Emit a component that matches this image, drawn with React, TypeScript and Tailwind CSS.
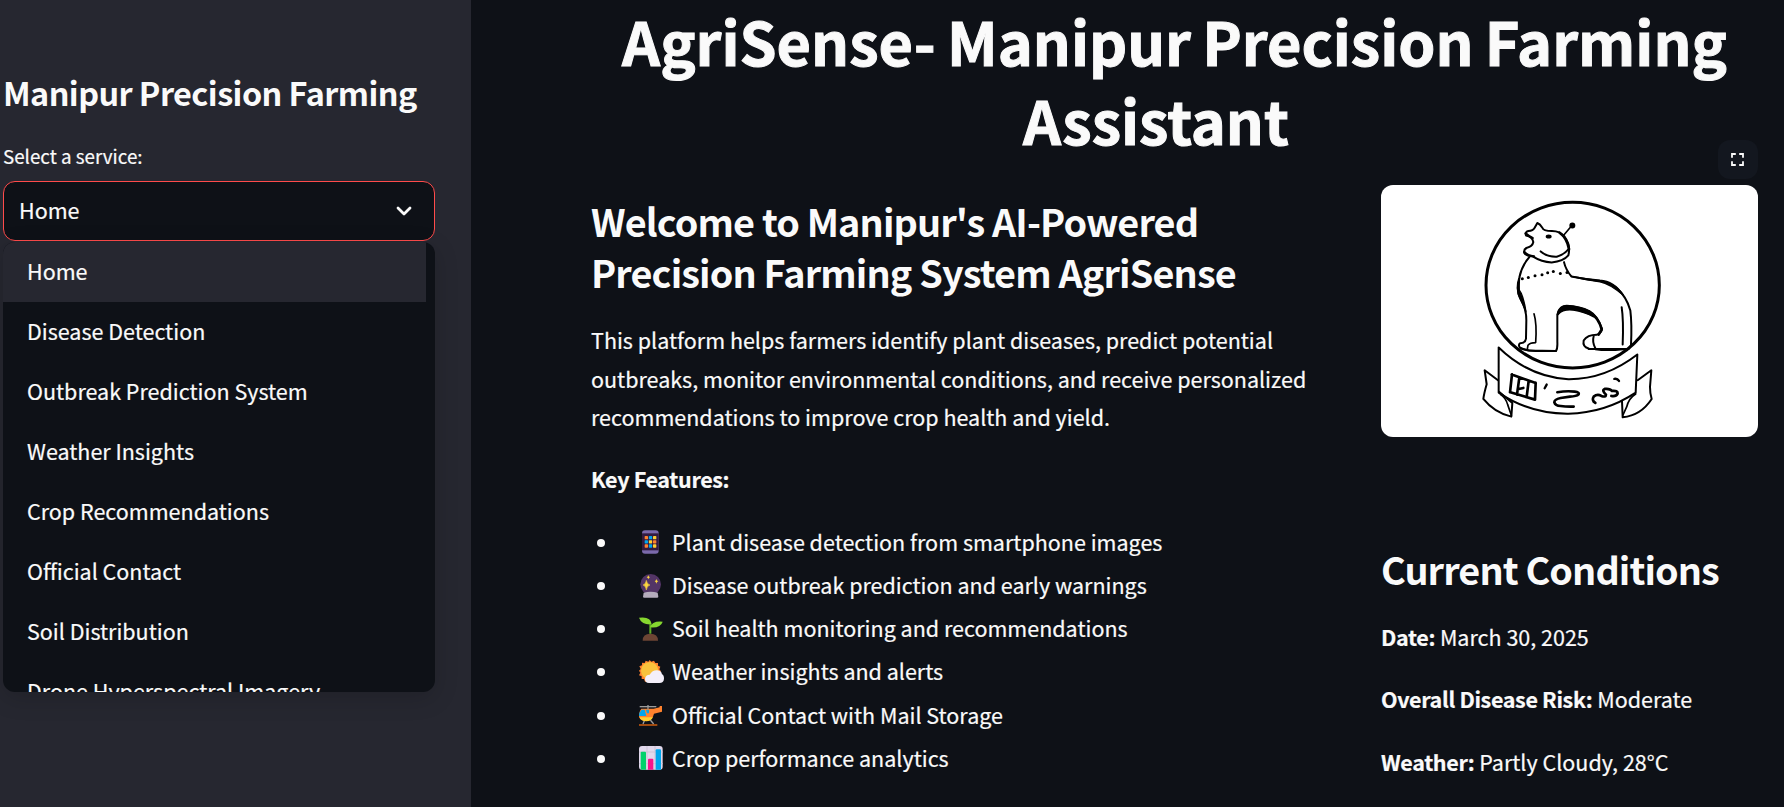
import type { ReactNode } from 'react';

const services = [
  'Home',
  'Disease Detection',
  'Outbreak Prediction System',
  'Weather Insights',
  'Crop Recommendations',
  'Official Contact',
  'Soil Distribution',
  'Drone Hyperspectral Imagery',
];

function Glyph({ children }: { children: ReactNode }) {
  return (
    <svg viewBox="0 0 75 72" className="mt-[2px] h-[24px] w-[25px] shrink-0">
      {children}
    </svg>
  );
}

const PhoneGlyph = () => (
  <Glyph>
    <rect x="9" y="1" width="50" height="70" rx="9" fill="#7a69ab" />
    <rect x="9" y="10" width="50" height="51" fill="#321b41" />
    {['#ff822d', '#00a6ed', '#ffce31', '#00a6ed', '#ffce31', '#ff822d', '#ff822d', '#00a6ed', '#ffce31'].map((c, i) => (
      <rect key={i} x={17 + (i % 3) * 12.5} y={18 + Math.floor(i / 3) * 12.5} width="10" height="10" rx="2" fill={c} />
    ))}
  </Glyph>
);

const CrystalGlyph = () => (
  <Glyph>
    <circle cx="35" cy="31" r="31" fill="#533566" />
    <path d="M14 56Q35 50 56 56L58 68Q58 71 54 71H16Q12 71 12 68Z" fill="#b4acbc" />
    <path d="M22 19Q24 31 33 33Q24 35 22 48Q20 35 12 33Q20 31 22 19Z" fill="#fcd53f" stroke="#fcd53f" strokeWidth="1.5" />
    <path d="M28 4Q29 9 33 10Q29 11 28 16Q27 11 23 10Q27 9 28 4ZM52 15Q53 20 58 22Q53 23 52 29Q51 23 47 22Q51 20 52 15Z" fill="#fcd53f" />
  </Glyph>
);

const SeedlingGlyph = () => (
  <Glyph>
    <path d="M11 71Q11 50 34 50Q57 50 57 71Z" fill="#6d4534" />
    <path d="M34 50V22" fill="none" stroke="#5fb022" strokeWidth="6" />
    <path d="M0 2Q36 -3 38 22Q8 24 0 2Z" fill="#86d72f" />
    <path d="M33 31Q39 11 71 14Q65 34 33 31Z" fill="#86d72f" />
  </Glyph>
);

const SunGlyph = () => (
  <Glyph>
    <path
      d="M32 0L37 5L45 2L49 9L57 9L57 17L64 20L61 28L66 34L61 39L64 47L57 51L45 63L32 65L18 65L15 57L8 57L8 49L0 46L4 38L0 32L5 27L1 19L9 16L9 8L17 9L20 2L28 5Z"
      fill="#ff822d"
    />
    <circle cx="32" cy="32" r="26" fill="#f9c23c" />
    <path d="M30 69Q17 68 18 56Q20 44 32 44Q40 31 53 31Q67 31 69 43Q75 45 75 56Q74 69 61 69Z" fill="#f4effa" />
  </Glyph>
);

const HelicopterGlyph = () => (
  <Glyph>
    <path d="M2 11H52" stroke="#9b9b9b" strokeWidth="4" />
    <path d="M27 6V18" stroke="#9b9b9b" strokeWidth="4" />
    <path d="M16 53L12 63M34 51L44 63" stroke="#9b9b9b" strokeWidth="4" />
    <path d="M7 17H44L62 13V9H69V26L45 32Q40 54 22 54Q5 54 0 41Q0 24 7 17Z" fill="#ff822d" />
    <path d="M1 43H42Q36 55 22 55Q6 55 1 43Z" fill="#ffce31" />
    <path d="M8 20H17L22 39H0Q0 27 8 20ZM21 20H30V31H24Z" fill="#00a6ed" />
    <path d="M0 66H55" stroke="#e8660d" strokeWidth="4" />
  </Glyph>
);

const ChartGlyph = () => (
  <Glyph>
    <rect x="0" y="0" width="71" height="71" rx="9" fill="#e1d8ec" />
    <path d="M0 18H71M0 53H71M24 0V71M48 0V71" stroke="#cdc4d6" strokeWidth="3" />
    <path d="M5 71V20Q5 17 8 17H18Q21 17 21 20V71Z" fill="#00d26a" />
    <path d="M27 71V41Q27 38 30 38H40Q43 38 43 41V71Z" fill="#f8148c" />
    <path d="M50 71V13Q50 10 53 10H63Q66 10 66 13V71Z" fill="#00a6ed" />
  </Glyph>
);

const features = [
  { icon: <PhoneGlyph />, text: 'Plant disease detection from smartphone images' },
  { icon: <CrystalGlyph />, text: 'Disease outbreak prediction and early warnings' },
  { icon: <SeedlingGlyph />, text: 'Soil health monitoring and recommendations' },
  { icon: <SunGlyph />, text: 'Weather insights and alerts' },
  { icon: <HelicopterGlyph />, text: 'Official Contact with Mail Storage' },
  { icon: <ChartGlyph />, text: 'Crop performance analytics' },
];

const collarBeads = [
  [187, 296],
  [205, 292],
  [225, 287],
  [246, 284],
  [263, 278],
  [280, 274],
  [301, 280],
  [321, 277],
];

function Emblem() {
  return (
    <svg
      viewBox="-237 15 1131 755"
      preserveAspectRatio="none"
      className="h-full w-full"
      fill="none"
      stroke="#000"
      strokeWidth="6"
      strokeLinecap="round"
      strokeLinejoin="round"
    >
      <ellipse cx="338" cy="315" rx="260" ry="248" strokeWidth="9" />
      {/* head */}
      <path d="M232 129L224 143Q219 152 205 153Q194 156 198 166Q218 170 220 186Q217 200 201 203Q190 207 193 219Q200 228 218 229Q245 246 275 247Q310 244 325 226Q333 195 314 170Q300 153 276 153Q250 153 247 143Q240 132 232 129Z" />
      <path d="M197 160Q207 169 218 174M193 216Q203 227 222 229" strokeWidth="7" />
      <path d="M242 214Q262 231 290 230Q313 223 325 208" strokeWidth="6" />
      <ellipse cx="266" cy="169" rx="6" ry="3" fill="#000" />
      <path d="M309 168L335 137" strokeWidth="5" />
      <path d="M299 158Q321 174 327 207" strokeWidth="8" />
      <circle cx="337" cy="136" r="6" fill="#000" />
      {/* collar */}
      {collarBeads.map(([x, y]) => (
        <circle key={x} cx={x} cy={y} r="4.5" fill="#000" stroke="none" />
      ))}
      {/* back and hind leg */}
      <path d="M312 246Q317 268 334 289Q370 296 408 301Q445 303 470 324Q500 350 511 391Q516 430 513 495L506 506L386 506" />
      <path d="M334 289Q375 300 420 305Q448 310 490 345Q462 302 420 300Q380 297 334 289Z" fill="#000" strokeWidth="4" />
      <path d="M485 381Q491 420 488 493" strokeWidth="6" />
      {/* chest and front leg */}
      <path d="M208 231Q185 257 178 292Q166 330 182 358Q199 385 199 420L198 475Q196 488 181 489Q172 494 182 505L205 511L288 512Q293 505 292 485V404Q295 384 312 380" />
      <path d="M179 291Q165 330 182 358L198 395Q190 345 178 330Q177 310 179 291Z" fill="#000" strokeWidth="4" />
      <path d="M222 401Q231 430 227 487Q210 487 204 495L202 507" strokeWidth="5" />
      {/* belly */}
      <path d="M293 403Q299 377 320 377Q360 379 388 393Q412 406 426 445Q425 459 410 464Q382 464 371 481Q367 500 386 505" />
      <path d="M295 402Q298 379 320 377Q365 379 390 394L401 410Q372 395 340 390Q310 386 295 402Z" fill="#000" strokeWidth="4" />
      <path d="M388 395Q416 412 425 448L416 463" strokeWidth="8" />
      <path d="M401 468Q396 485 406 504" />
      <path d="M182 503Q205 514 236 512H288M406 507Q440 512 490 507" strokeWidth="6" />
      {/* ribbon */}
      <path d="M116 502V637Q210 701 325 700Q435 698 527 637L532 523Q435 598 325 597Q207 590 116 502Z" strokeWidth="6" />
      <path d="M114 600L74 570L80 612Q72 640 70 656Q104 698 154 709L157 668L118 635" strokeWidth="6" />
      <path d="M122 643Q137 652 143 673L154 705" strokeWidth="5" />
      <path d="M533 600L574 570L570 620Q570 640 575 656Q543 705 488 711L486 663" strokeWidth="6" />
      <path d="M527 641Q506 654 500 680L489 704" strokeWidth="5" />
      {/* motto */}
      <path d="M156 582L150 636M155 583L227 608M151 636L225 658M227 608L225 658M178 592L171 643M206 602L200 650M173 627L190 623" strokeWidth="8" />
      <path d="M260 613L254 624" strokeWidth="7" />
      <path d="M292 636Q320 631 344 634Q360 636 355 643Q350 648 330 649L302 653Q283 657 283 666Q286 676 302 677Q320 680 341 679" strokeWidth="8" />
      <path d="M406 668Q394 660 401 649Q412 640 424 647Q438 652 438 643Q424 630 434 626Q450 624 456 632Q474 630 473 640Q468 650 454 647" strokeWidth="8" />
      <path d="M463 596Q472 594 477 602" strokeWidth="7" />
    </svg>
  );
}

export default function App() {
  return (
    <div className="flex h-[807px] w-[1784px] overflow-hidden bg-[#0e1117] font-['Noto_Sans_CJK_SC','Noto_Sans_CJK_JP',sans-serif] text-[21.5px] text-[#fafafa] [-webkit-text-stroke:0.2px_#fafafa]">
      <aside className="w-[471px] shrink-0 bg-[#262730] pl-[3px] pt-[70px]">
        <h2 className="whitespace-nowrap text-[32.4px] font-semibold leading-[43px] tracking-[-0.56px] [-webkit-text-stroke:0px]">Manipur Precision Farming</h2>
        <p className="mt-[27px] whitespace-nowrap text-[18.8px] leading-[32px]">Select a service:</p>
        <div className="relative mt-[9px] w-[432px]">
          <button className="flex h-[60px] w-full items-center justify-between rounded-[12px] border border-[#ff4b4b] bg-[#0e1117] pl-[15px] pr-[18px]">
            <span className="pb-px">Home</span>
            <svg viewBox="0 0 24 24" className="h-[24px] w-[24px]" fill="none" stroke="#fafafa" strokeWidth="2.8" strokeLinecap="round" strokeLinejoin="round">
              <path d="M6 9L12 15L18 9" />
            </svg>
          </button>
          <ul className="absolute left-0 top-[61px] h-[450px] w-[432px] overflow-hidden rounded-[12px] bg-[#0e1117] shadow-[0_6px_24px_rgba(0,0,0,0.16)]">
            {services.map((s, i) => (
              <li
                key={s}
                className={
                  i === 0
                    ? 'mr-[9px] flex h-[60px] items-center whitespace-nowrap bg-[#262730] pb-[2px] pl-[24px]'
                    : 'mr-[9px] flex h-[60px] items-center whitespace-nowrap pb-[2px] pl-[24px]'
                }
              >
                {s}
              </li>
            ))}
          </ul>
        </div>
      </aside>

      <main className="flex-1 pl-[120px] pr-[26px] pt-px">
        <h1 className="whitespace-nowrap text-center text-[59.4px] font-bold leading-[79px] [-webkit-text-stroke:1px_#fafafa] [word-spacing:-2.2px]">
          <span className="block">AgriSense- Manipur Precision Farming</span>
          <span className="block pr-[37px]">Assistant</span>
        </h1>
        <div className="flex justify-between">
          <section className="w-[730px] pt-[37px]">
            <h3 className="whitespace-nowrap text-[37.8px] font-semibold leading-[50.6px] tracking-[-0.87px] [-webkit-text-stroke:0px]">
              Welcome to Manipur's AI-Powered
              <br />
              Precision Farming System AgriSense
            </h3>
            <p className="mt-[24px] whitespace-nowrap leading-[38.4px]">
              This platform helps farmers identify plant diseases, predict potential
              <br />
              outbreaks, monitor environmental conditions, and receive personalized
              <br />
              recommendations to improve crop health and yield.
            </p>
            <p className="mt-[24px] font-bold leading-[38.4px] tracking-[-0.34px]">Key Features:</p>
            <ul className="mt-[21px]">
              {features.map((f) => (
                <li key={f.text} className="flex h-[43.2px] items-center whitespace-nowrap pl-[6px]">
                  <span className="mt-[3px] h-[8px] w-[8px] shrink-0 rounded-full bg-[#fafafa]" />
                  <span className="flex items-center gap-[8px] pl-[34px]">
                    {f.icon}
                    <span className="leading-[43px]">{f.text}</span>
                  </span>
                </li>
              ))}
            </ul>
          </section>

          <section className="w-[377px] pt-[26px]">
            <div className="relative h-[252px] w-full">
              <div className="h-full w-full overflow-hidden rounded-[12px] bg-white">
                <Emblem />
              </div>
              <button className="absolute -top-[45px] right-0 flex h-[39px] w-[40px] items-center justify-center rounded-[12px] bg-[#13171f] pr-px">
                <svg viewBox="0 0 13 13" className="h-[13px] w-[13px]" fill="none" stroke="#fafafa" strokeWidth="1.8">
                  <path d="M1 4.8V1H4.8M8.2 1H12V4.8M12 8.2V12H8.2M4.8 12H1V8.2" />
                </svg>
              </button>
            </div>
            <h3 className="mt-[107px] whitespace-nowrap text-[37.8px] font-semibold leading-[50px] tracking-[-0.9px] [-webkit-text-stroke:0px]">Current Conditions</h3>
            <p className="mt-[24px] whitespace-nowrap leading-[38.4px]">
              <b className="tracking-[-0.34px]">Date:</b> March 30, 2025
            </p>
            <p className="mt-[24px] whitespace-nowrap leading-[38.4px]">
              <b className="tracking-[-0.34px]">Overall Disease Risk:</b> Moderate
            </p>
            <p className="mt-[24px] whitespace-nowrap leading-[38.4px]">
              <b className="tracking-[-0.34px]">Weather:</b> Partly Cloudy, 28°C
            </p>
          </section>
        </div>
      </main>
    </div>
  );
}
